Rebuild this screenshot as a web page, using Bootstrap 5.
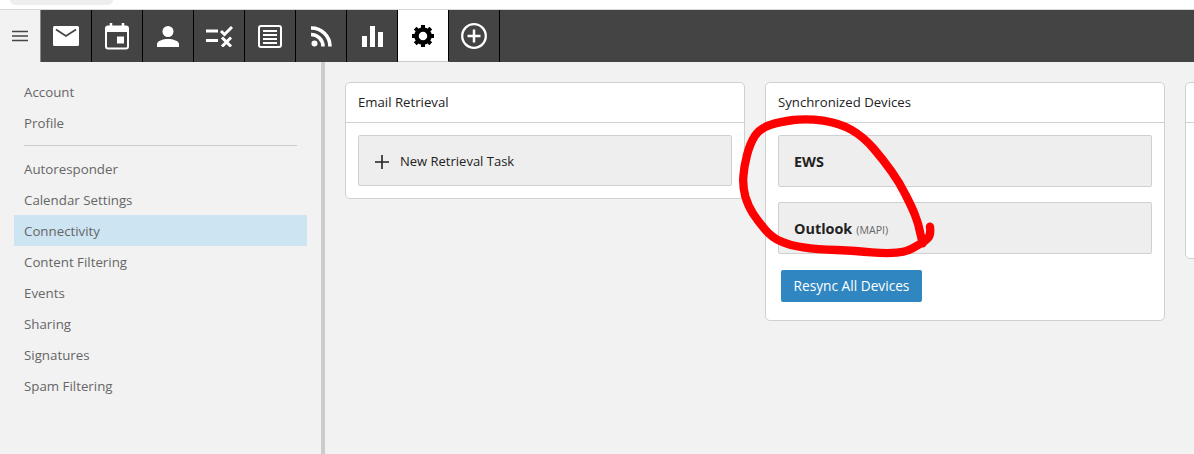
<!DOCTYPE html>
<html lang="en">
<head>
<meta charset="utf-8">
<title>Connectivity</title>
<link href="https://cdn.jsdelivr.net/npm/bootstrap@5.3.0/dist/css/bootstrap.min.css" rel="stylesheet">
<style>
html,body{height:100%;overflow:hidden}
body{background:#f2f2f2;font-family:"Open Sans","Noto Sans",sans-serif;font-size:13px;color:#222}
.chrome-strip{height:10px;background:#fff;border-bottom:1px solid #d8d8d8}
.chrome-tab{width:103px;height:5px;margin-left:10px;background:#eee;border-radius:0 0 10px 10px}
.app-bar{height:52px;background:#444}
.menu-btn{width:41px;background:#f2f2f2;border-right:1px solid #888}
.app-tab{width:51px;border-right:1px solid #000}
.app-tab.is-on{background:#fff;border-bottom:1px solid #ccc}
.app-shell{height:392px}
.side-pane{width:325px;border-right:4px solid #ccc;padding:14px 14px 0;flex:none}
.side-link{display:block;height:31px;line-height:33px;width:293px;padding-left:10px;color:#666;text-decoration:none;font-size:13.3px}
.side-link.is-on{background:#cde4f2}
.side-rule{width:273px;margin:7px 0 7px 10px;border-top:1px solid #ccc;opacity:1}
.main-pane{padding:20px 20px 0;gap:20px;overflow:hidden}
.set-card{width:400px;flex:none;border:1px solid #d0d0d0;border-radius:5px;background:#fff;align-self:flex-start}
.set-head{height:40px;padding:0 12px;line-height:39px;border-bottom:1px solid #d0d0d0;font-size:13.2px}
.set-body{padding:12px 12px 0}
.set-item{height:52px;background:#eee;border:1px solid #d0d0d0;border-radius:2px;padding:2px 15px 0;margin-bottom:15px}
.set-item.task-row{height:51px;margin-bottom:12px}
.set-item b{font-size:14.4px;font-weight:700;color:#222}
.set-item small{font-size:10.6px;color:#666;margin-left:4px}
.plus-glyph{margin-left:1px}
.task-label{margin-left:11px}
.resync{background:#2f86c1;color:#fff;border:0;border-radius:2px;height:32px;width:141px;padding:0;margin:16px 0 18px 3px;font-size:13.7px;display:block}
.blank-body{height:135px}
.scribble{position:absolute;left:730px;top:80px;pointer-events:none}
</style>
</head>
<body>
<div class="chrome-strip"><div class="chrome-tab"></div></div>
<nav class="app-bar d-flex">
  <div class="menu-btn d-flex align-items-center justify-content-center">
    <svg width="16" height="12" viewBox="0 0 16 12"><path d="M0 1.5h16M0 6h16M0 10.500h16" stroke="#444" stroke-width="1.500"/></svg>
  </div>
  <div class="app-tab d-flex align-items-center justify-content-center">
    <svg width="26" height="20" viewBox="0 0 26 20"><rect width="26" height="20" rx="1.500" fill="#fff"/><path d="M3 3.500l10 6.500 10-6.500" fill="none" stroke="#444" stroke-width="1.800"/></svg>
  </div>
  <div class="app-tab d-flex align-items-center justify-content-center">
    <svg width="24" height="27" viewBox="0 0 24 27"><path d="M6 0v5M18 0v5" stroke="#fff" stroke-width="2.500"/><rect x="1" y="3.500" width="22" height="22" rx="2" fill="none" stroke="#fff" stroke-width="2"/><rect x="2" y="4" width="20" height="5" fill="#fff"/><rect x="12" y="13.500" width="7" height="7" fill="#fff"/></svg>
  </div>
  <div class="app-tab d-flex align-items-center justify-content-center">
    <svg width="22" height="21" viewBox="0 0 22 21"><circle cx="11" cy="5.500" r="5.500" fill="#fff"/><path d="M0 21v-3c0-3 6-5 11-5s11 2 11 5v3z" fill="#fff"/></svg>
  </div>
  <div class="app-tab d-flex align-items-center justify-content-center">
    <svg width="27" height="21" viewBox="0 0 27 21"><path d="M0 5h12M0 14.500h12" stroke="#fff" stroke-width="3"/><path d="M15 5l3.500 3.500L26 1M16 11.500l9 9M25 11.500l-9 9" fill="none" stroke="#fff" stroke-width="3"/></svg>
  </div>
  <div class="app-tab d-flex align-items-center justify-content-center">
    <svg width="24" height="23" viewBox="0 0 24 23"><rect x="1" y="1" width="22" height="21" rx="2" fill="none" stroke="#fff" stroke-width="2"/><path d="M5 6h14M5 10h14M5 14h14M5 18h14" stroke="#fff" stroke-width="2"/></svg>
  </div>
  <div class="app-tab d-flex align-items-center justify-content-center">
    <svg width="21" height="21" viewBox="0 0 21 21"><circle cx="3.500" cy="17.500" r="3" fill="#fff"/><path d="M0 8.500a12 12 0 0 1 12 12M0 2a18.500 18.500 0 0 1 19 18.500" fill="none" stroke="#fff" stroke-width="3.600"/></svg>
  </div>
  <div class="app-tab d-flex align-items-center justify-content-center">
    <svg width="21" height="21" viewBox="0 0 21 21"><rect y="10" width="5" height="11" fill="#fff"/><rect x="8" y="0" width="5" height="21" fill="#fff"/><rect x="16" y="6" width="5" height="15" fill="#fff"/></svg>
  </div>
  <div class="app-tab is-on d-flex align-items-center justify-content-center">
    <svg width="22" height="22" viewBox="0 0 22 22"><circle cx="11" cy="11" r="6.500" fill="none" stroke="#000" stroke-width="4.500"/><path d="M11 0v22M0 11h22M3.200 3.200l15.600 15.600M18.800 3.200L3.200 18.800" stroke="#000" stroke-width="4" stroke-dasharray="4.500 13 4.500"/></svg>
  </div>
  <div class="app-tab d-flex align-items-center justify-content-center">
    <svg width="26" height="26" viewBox="0 0 26 26"><circle cx="13" cy="13" r="11.800" fill="none" stroke="#fff" stroke-width="2.300"/><path d="M13 6.500v13M6.500 13h13" stroke="#fff" stroke-width="2.500"/></svg>
  </div>
</nav>
<div class="app-shell d-flex">
  <aside class="side-pane">
    <a class="side-link" href="#">Account</a>
    <a class="side-link" href="#">Profile</a>
    <hr class="side-rule">
    <a class="side-link" href="#">Autoresponder</a>
    <a class="side-link" href="#">Calendar Settings</a>
    <a class="side-link is-on" href="#">Connectivity</a>
    <a class="side-link" href="#">Content Filtering</a>
    <a class="side-link" href="#">Events</a>
    <a class="side-link" href="#">Sharing</a>
    <a class="side-link" href="#">Signatures</a>
    <a class="side-link" href="#">Spam Filtering</a>
  </aside>
  <main class="main-pane d-flex flex-grow-1">
    <section class="set-card">
      <div class="set-head">Email Retrieval</div>
      <div class="set-body">
        <div class="set-item task-row d-flex align-items-center">
          <svg class="plus-glyph" width="14" height="14" viewBox="0 0 14 14"><path d="M7 0v14M0 7h14" stroke="#222" stroke-width="1.600"/></svg>
          <span class="task-label">New Retrieval Task</span>
        </div>
      </div>
    </section>
    <section class="set-card">
      <div class="set-head">Synchronized Devices</div>
      <div class="set-body">
        <div class="set-item d-flex align-items-center"><b>EWS</b></div>
        <div class="set-item d-flex align-items-center"><div><b>Outlook</b><small>(MAPI)</small></div></div>
        <button class="resync" type="button">Resync All Devices</button>
      </div>
    </section>
    <section class="set-card">
      <div class="set-head">&nbsp;</div>
      <div class="set-body blank-body"></div>
    </section>
  </main>
</div>
<svg class="scribble" width="210" height="180" viewBox="0 0 630 540"><path d="M600 440Q603 465 594 474Q585 483 575 489Q565 495 547 505Q530 515 500 518Q470 521 425 517Q380 513 320 510Q260 508 220 502Q180 497 152 484Q125 472 105 448Q85 425 70 402Q55 380 46 350Q38 320 40 290Q42 260 51 225Q60 190 75 167Q90 145 120 135Q150 125 190 120Q230 115 280 122Q330 130 365 150Q400 170 430 205Q460 240 485 275Q510 310 527 345Q545 380 555 405Q565 430 571 460L578 490" fill="none" stroke="#f00" stroke-width="25" stroke-linecap="round" stroke-linejoin="round"/></svg>
<script src="https://cdn.jsdelivr.net/npm/bootstrap@5.3.0/dist/js/bootstrap.bundle.min.js"></script>
</body>
</html>
